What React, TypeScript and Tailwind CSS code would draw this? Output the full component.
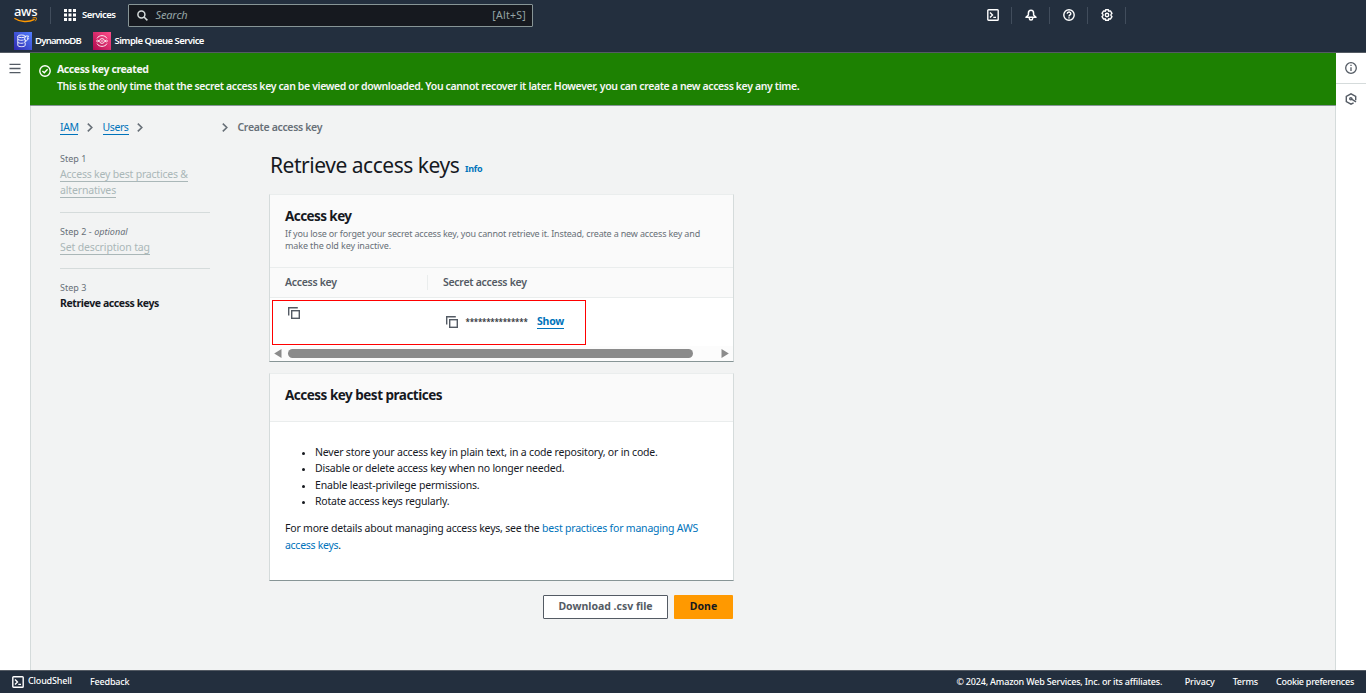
import type { ReactNode } from "react";

function TerminalIcon() {
  return (
    <svg width="12" height="12" viewBox="0 0 12 12" fill="none" stroke="#fff" strokeWidth="1.4" className="shrink-0">
      <rect x="0.8" y="0.8" width="10.4" height="10.4" rx="0.8" />
      <path d="M3 3.4 5.5 6 3 8.6M6.3 8.4H9" />
    </svg>
  );
}

function BellIcon() {
  return (
    <svg width="12" height="12" viewBox="0 0 12 12" fill="none" stroke="#fff" strokeWidth="1.5">
      <path d="M6 1.2C4.2 1.2 3.4 2.6 3.4 4.2V6L1 8.3H11L8.6 6V4.2C8.6 2.6 7.8 1.2 6 1.2Z" strokeLinejoin="round" />
      <path d="M4.2 9.2C4.5 11.7 7.5 11.7 7.8 9.2" />
    </svg>
  );
}

function HelpIcon() {
  return (
    <svg width="12" height="12" viewBox="0 0 12 12" fill="none" stroke="#fff" strokeWidth="1.4">
      <circle cx="6" cy="6" r="5.2" />
      <path d="M4.2 4.8C4.2 2.5 7.8 2.5 7.8 4.7C7.8 6 6 5.9 6 7.5M6 8.2V9.5" />
    </svg>
  );
}

function GearIcon() {
  return (
    <svg width="12" height="12" viewBox="0 0 12 12" fill="none" stroke="#fff" strokeWidth="1.4" strokeLinejoin="round">
      <path d="M4.6 0.8H7.4L7.8 2.2L9.4 1.9L11 4.3L10 5.4V6.6L11 7.7L9.4 10.1L7.8 9.8L7.4 11.2H4.6L4.2 9.8L2.6 10.1L1 7.7L2 6.6V5.4L1 4.3L2.6 1.9L4.2 2.2Z" />
      <circle cx="6" cy="6" r="1.7" />
    </svg>
  );
}

function CopyIcon() {
  return (
    <svg width="12" height="12" viewBox="0 0 12 12" fill="none" stroke="#545b64" strokeWidth="1.4" className="shrink-0">
      <path d="M0.7 8.5V0.7H9.8" />
      <rect x="3.7" y="3.7" width="7.6" height="7.6" />
    </svg>
  );
}

function Chevron() {
  return (
    <svg width="6" height="9" viewBox="0 0 6 9" fill="none" stroke="#687078" strokeWidth="1.6" className="shrink-0">
      <path d="M0.8 0.6 4.8 4.5 0.8 8.4" />
    </svg>
  );
}

function AwsLogo() {
  return (
    <div className="relative h-[18px] w-[24px]">
      <span className="absolute left-0 top-[-2px] text-[13px] font-medium leading-[14px] tracking-[-0.4px] text-white">aws</span>
      <svg width="24" height="7" viewBox="0 0 24 7" fill="none" stroke="#f90" className="absolute left-0 top-[11px]">
        <path d="M0.4 1.2C6 5.2 14.5 5.6 20.6 2.4" strokeWidth="1.4" />
        <path d="M18.6 1C20.4 0.5 22 0.5 22.4 0.9C22.7 1.4 22.2 3 21.2 4.2" strokeWidth="1" />
      </svg>
    </div>
  );
}

function Separator() {
  return <div className="h-[17px] w-px bg-[#414d5c]" />;
}

function TopBar() {
  return (
    <header className="h-[53px] shrink-0 border-b border-[#545b64] bg-[#232f3e] text-white">
      <div className="flex h-[30px] items-center">
        <div className="flex w-[50px] pl-[14px]"><AwsLogo /></div>
        <Separator />
        <svg width="12" height="12" viewBox="0 0 12 12" fill="#fff" className="ml-[13px]">
          {[0, 4.5, 9].map((y) => [0, 4.5, 9].map((x) => <rect key={`${x}-${y}`} x={x} y={y} width="3" height="3" />))}
        </svg>
        <span className="ml-[6px] w-[46px] whitespace-nowrap text-[9.5px] font-semibold tracking-[-0.57px]">Services</span>
        <div className="mt-[1px] flex h-[23px] w-[405px] items-center rounded-[1px] border border-[#879596] bg-[#16191f] pr-[6px]">
          <svg width="11" height="11" viewBox="0 0 11 11" fill="none" stroke="#d5dbdb" strokeWidth="1.5" className="ml-[7.5px]">
            <circle cx="4.4" cy="4.4" r="3.5" />
            <path d="M7 7 10.4 10.4" />
          </svg>
          <span className="ml-[8px] text-[11px] italic tracking-[-0.14px] text-[#95a5a6]">Search</span>
          <span className="ml-auto text-[10.5px] tracking-[0.27px] text-[#95a5a6]">[Alt+S]</span>
        </div>
        <div className="ml-[454px] flex items-center">
          <TerminalIcon />
          <div className="flex w-[26px] justify-center pr-px"><Separator /></div>
          <BellIcon />
          <div className="flex w-[26px] justify-center pr-px"><Separator /></div>
          <HelpIcon />
          <div className="flex w-[26px] justify-center pr-px"><Separator /></div>
          <GearIcon />
          <div className="flex w-[26px] justify-center pr-px"><Separator /></div>
        </div>
      </div>
      <div className="flex h-[22px] items-center whitespace-nowrap pl-[14px] text-[9.5px] font-semibold">
        <svg width="18" height="18" viewBox="0 0 18 18" fill="none" stroke="#fff" strokeWidth="0.9">
          <defs>
            <linearGradient id="db" x1="0" y1="1" x2="1" y2="0"><stop stopColor="#2e27ad" /><stop offset="1" stopColor="#527fff" /></linearGradient>
          </defs>
          <rect width="18" height="18" fill="url(#db)" stroke="none" />
          <ellipse cx="7.5" cy="4.3" rx="3.7" ry="1.3" />
          <path d="M3.8 4.3V13.3C3.8 15.1 11.2 15.1 11.2 13.3V11M3.8 7.2C4.8 8.4 8 8.5 9.5 8M3.8 10.3C4.8 11.4 8 11.5 9.5 11M11.2 4.3V5" />
          <path d="M11.5 4H14.5L13.4 6.6H14.6L10.7 10.7L11.6 7.8H10.3Z" />
        </svg>
        <span className="ml-[3px] w-[58px] tracking-[-0.75px]">DynamoDB</span>
        <svg width="18" height="18" viewBox="0 0 18 18" fill="none" stroke="#fff" strokeWidth="0.9">
          <defs>
            <linearGradient id="sq" x1="0" y1="1" x2="1" y2="0"><stop stopColor="#b0084d" /><stop offset="1" stopColor="#ff4f8b" /></linearGradient>
          </defs>
          <rect width="18" height="18" fill="url(#sq)" stroke="none" />
          <path d="M4 6.4C6 2.7 12 2.7 14 6.4M4 11.6C6 15.3 12 15.3 14 11.6" />
          <circle cx="9" cy="9" r="2.4" />
          <path d="M3 9H6M12 9H15M4.6 7.8 5.9 9 4.6 10.2M13.4 7.8 12.1 9 13.4 10.2M8 9H10" />
        </svg>
        <span className="ml-[3.5px] tracking-[-0.53px]">Simple Queue Service</span>
      </div>
    </header>
  );
}

function Banner() {
  return (
    <div className="z-10 -mr-px flex h-[53px] border-b border-[#879596] bg-[#1d8102] pl-[9px] pt-[8px] text-[10.5px] text-[#f6f6f6]">
      <svg width="12" height="12" viewBox="0 0 12 12" fill="none" stroke="#fff" strokeWidth="1.4" className="mt-[4px]">
        <circle cx="6" cy="6" r="5.2" />
        <path d="M3.4 6 5.3 7.8 8.6 4.3" />
      </svg>
      <div className="ml-[6px] whitespace-nowrap">
        <div className="h-[17px] font-bold leading-[17px] tracking-[-0.41px]">Access key created</div>
        <div className="font-semibold leading-[17px] tracking-[-0.37px]">
          This is the only time that the secret access key can be viewed or downloaded. You cannot recover it later. However, you can create a new access key any time.
        </div>
      </div>
    </div>
  );
}

function DoneLink({ children, className }: { children: ReactNode; className: string }) {
  return <span className={`inline-block h-[14px] border-b border-[#aab7b8] leading-[13px] text-[#aab7b8] ${className}`}>{children}</span>;
}

function Steps() {
  return (
    <nav className="w-[150px] shrink-0 whitespace-nowrap pt-[3px] text-[10.5px]">
      <div className="h-[61px] border-b border-[#d5dbdb]">
        <div className="h-[14px] text-[9px] leading-[13px] text-[#687078]">Step 1</div>
        <div className="flex h-[16px] items-end"><DoneLink className="tracking-[-0.2px]">Access key best practices &amp;</DoneLink></div>
        <div className="flex h-[16px] items-end"><DoneLink className="tracking-[-0.15px]">alternatives</DoneLink></div>
      </div>
      <div className="mt-[12px] h-[44px] border-b border-[#d5dbdb]">
        <div className="h-[14px] text-[9px] leading-[13px] tracking-[0.03px] text-[#687078]">Step 2 - <i>optional</i></div>
        <div className="flex h-[16px] items-end"><DoneLink className="tracking-[-0.13px]">Set description tag</DoneLink></div>
      </div>
      <div className="mt-[12px]">
        <div className="text-[9px] leading-[13px] text-[#687078]">Step 3</div>
        <div className="mt-[2px] font-bold leading-[15px] tracking-[-0.41px] text-[#16191f]">Retrieve access keys</div>
      </div>
    </nav>
  );
}

const card = "w-[465px] border border-b-[#879596] border-l-[#d5dbdb] border-r-[#d5dbdb] border-t-[#eaeded] bg-white";

function AccessKeyCard() {
  return (
    <section className={`${card} h-[168px]`}>
      <div className="h-[73px] whitespace-nowrap border-b border-[#eaeded] bg-[#fafafa] pl-[15px] pt-[12px]">
        <h2 className="text-[13.5px] font-bold leading-[19px] tracking-[-0.58px]">Access key</h2>
        <p className="mt-[2px] text-[9px] leading-[12px] text-[#687078]">
          <span className="tracking-[-0.173px]">If you lose or forget your secret access key, you cannot retrieve it. Instead, create a new access key and</span>
          <br />
          <span className="tracking-[-0.12px]">make the old key inactive.</span>
        </p>
      </div>
      <div className="flex h-[30px] items-center border-b border-[#eaeded] bg-[#fafafa] text-[10.5px] font-semibold text-[#545b64]">
        <span className="w-[157px] pl-[15px] tracking-[-0.3px]">Access key</span>
        <div className="h-[15px] w-px bg-[#eaeded]" />
        <span className="pl-[15px] tracking-[-0.28px]">Secret access key</span>
      </div>
      <div className="h-[48px] pl-[2px] pt-[2px]">
        <div className="flex h-[45px] w-[314px] border border-[#f00] text-[10.5px]">
          <div className="w-[173px] pl-[15px] pt-[6px]"><CopyIcon /></div>
          <div className="flex h-[42px] items-center">
            <CopyIcon />
            <span className="ml-[7.5px] w-[71.5px] pb-[1px] text-[8px] font-medium tracking-[-0.25px] text-[#16191f]">***************</span>
            <span className="h-[14px] border-b border-[#0073bb] font-bold leading-[13px] tracking-[-0.2px] text-[#0073bb]">Show</span>
          </div>
        </div>
      </div>
      <div className="flex h-[15px] items-center bg-[#fcfcfc] pl-[4px]">
        <svg width="8" height="9" viewBox="0 0 8 9" fill="#8b8b8b"><path d="M7.5 0.1V8.9L0.2 4.5Z" /></svg>
        <div className="ml-[6px] h-[9px] w-[405px] rounded-full bg-[#8b8b8b]" />
        <svg width="8" height="9" viewBox="0 0 8 9" fill="#8b8b8b" className="ml-[28px]"><path d="M0.5 0.1V8.9L7.8 4.5Z" /></svg>
      </div>
    </section>
  );
}

function Bullet({ children, className }: { children: ReactNode; className: string }) {
  return (
    <li className="flex items-center">
      <span className="mr-[10px] mt-[2px] size-[3px] rounded-full bg-[#16191f]" />
      <span className={className}>{children}</span>
    </li>
  );
}

function BestPracticesCard() {
  return (
    <section className={`${card} mt-[11px] h-[208px] whitespace-nowrap`}>
      <div className="h-[48px] border-b border-[#eaeded] bg-[#fafafa] pl-[15px] pt-[12px]">
        <h2 className="text-[13.5px] font-bold leading-[19px] tracking-[-0.5px]">Access key best practices</h2>
      </div>
      <ul className="pl-[32px] pt-[22px] text-[10.5px] leading-[16.4px]">
        <Bullet className="tracking-[-0.19px]">Never store your access key in plain text, in a code repository, or in code.</Bullet>
        <Bullet className="tracking-[-0.22px]">Disable or delete access key when no longer needed.</Bullet>
        <Bullet className="tracking-[-0.18px]">Enable least-privilege permissions.</Bullet>
        <Bullet className="tracking-[-0.21px]">Rotate access keys regularly.</Bullet>
      </ul>
      <p className="mt-[10px] pl-[15px] text-[10.5px] leading-[17px] tracking-[-0.209px]">
        For more details about managing access keys, see the <span className="text-[#0073bb]">best practices for managing AWS<br /><span className="tracking-[-0.28px]">access keys</span></span>.
      </p>
    </section>
  );
}

function Content() {
  return (
    <main className="flex-1 pl-[29px]">
      <div className="flex h-[43px] items-center whitespace-nowrap text-[10.5px]">
        <span className="mt-[1px] h-[14px] w-[18px] border-b border-[#0073bb] leading-[13px] tracking-[-0.4px] text-[#0073bb]">IAM</span>
        <span className="ml-[9px] flex w-[15.5px]"><Chevron /></span>
        <span className="mt-[1px] h-[14px] w-[26px] border-b border-[#0073bb] leading-[13px] tracking-[-0.4px] text-[#0073bb]">Users</span>
        <span className="ml-[8.5px] flex w-[85px]"><Chevron /></span>
        <span className="flex w-[15.5px]"><Chevron /></span>
        <span className="font-semibold tracking-[-0.33px] text-[#687078]">Create access key</span>
      </div>
      <div className="flex">
        <Steps />
        <div className="ml-[59px] w-[464px]">
          <div className="flex h-[45px] whitespace-nowrap pl-px pt-px">
            <h1 className="w-[195px] text-[21px] leading-[30px] tracking-[-0.47px]">Retrieve access keys</h1>
            <span className="pt-[12px] text-[9px] font-bold leading-[13px] tracking-[-0.24px] text-[#0073bb]">Info</span>
          </div>
          <AccessKeyCard />
          <BestPracticesCard />
          <div className="mt-[14px] flex justify-end gap-[6px] text-[10.5px] font-bold">
            <button className="h-[24px] w-[125px] rounded-[1px] border border-[#545b64] bg-white pb-[1px] text-[#545b64]">Download .csv file</button>
            <button className="h-[24px] w-[59px] rounded-[1px] bg-[#f90] pb-[1px] text-[#16191f]">Done</button>
          </div>
        </div>
      </div>
    </main>
  );
}

export default function App() {
  return (
    <div className="flex h-[693px] w-[1366px] flex-col overflow-hidden bg-white font-['Noto_Sans',sans-serif] text-[#16191f]">
      <TopBar />
      <div className="flex h-[617px]">
        <aside className="w-[30px] pl-[9px] pt-[10px]">
          <svg width="12" height="11" viewBox="0 0 12 11" stroke="#545b64" strokeWidth="1.4"><path d="M0.5 1.4H11.5M0.5 5.5H11.5M0.5 9.6H11.5" /></svg>
        </aside>
        <div className="flex w-[1306px] flex-col">
          <div className="mr-px flex flex-col"><Banner /></div>
          <div className="flex flex-1 border-x border-[#d5dbdb] bg-[#f2f3f3]"><Content /></div>
        </div>
        <aside className="w-[30px] text-[#545b64]">
          <div className="flex h-[31px] items-center justify-center border-b border-[#d5dbdb]">
            <svg width="12" height="12" viewBox="0 0 12 12" fill="none" stroke="#545b64" strokeWidth="1.3"><circle cx="6" cy="6" r="5.3" /><path d="M6 2.8V4.1M6 5.2V9.1" /></svg>
          </div>
          <div className="flex h-[30px] items-center justify-center">
            <svg width="12" height="12" viewBox="0 0 12 12" fill="none" stroke="#545b64" strokeWidth="1.4"><path d="M10.7 7.3V3.4L6 0.8 1.3 3.4V8.6L6 11.2 8.6 9.8" /><circle cx="5.8" cy="5.8" r="1.1" /><path d="M6.6 6.2 11 8.9" /></svg>
          </div>
        </aside>
      </div>
      <footer className="flex h-[23px] items-center whitespace-nowrap border-t border-[#545b64] bg-[#232f3e] px-[12px] text-[9px] font-medium text-white">
        <TerminalIcon />
        <span className="ml-[4px] w-[62px] pb-[2px] tracking-[-0.17px]">CloudShell</span>
        <span className="tracking-[-0.19px]">Feedback</span>
        <span className="ml-auto tracking-[-0.186px]">© 2024, Amazon Web Services, Inc. or its affiliates.</span>
        <span className="ml-[22.5px] tracking-[-0.13px]">Privacy</span>
        <span className="ml-[18px] tracking-[-0.18px]">Terms</span>
        <span className="ml-[18px] tracking-[-0.27px]">Cookie preferences</span>
      </footer>
    </div>
  );
}
